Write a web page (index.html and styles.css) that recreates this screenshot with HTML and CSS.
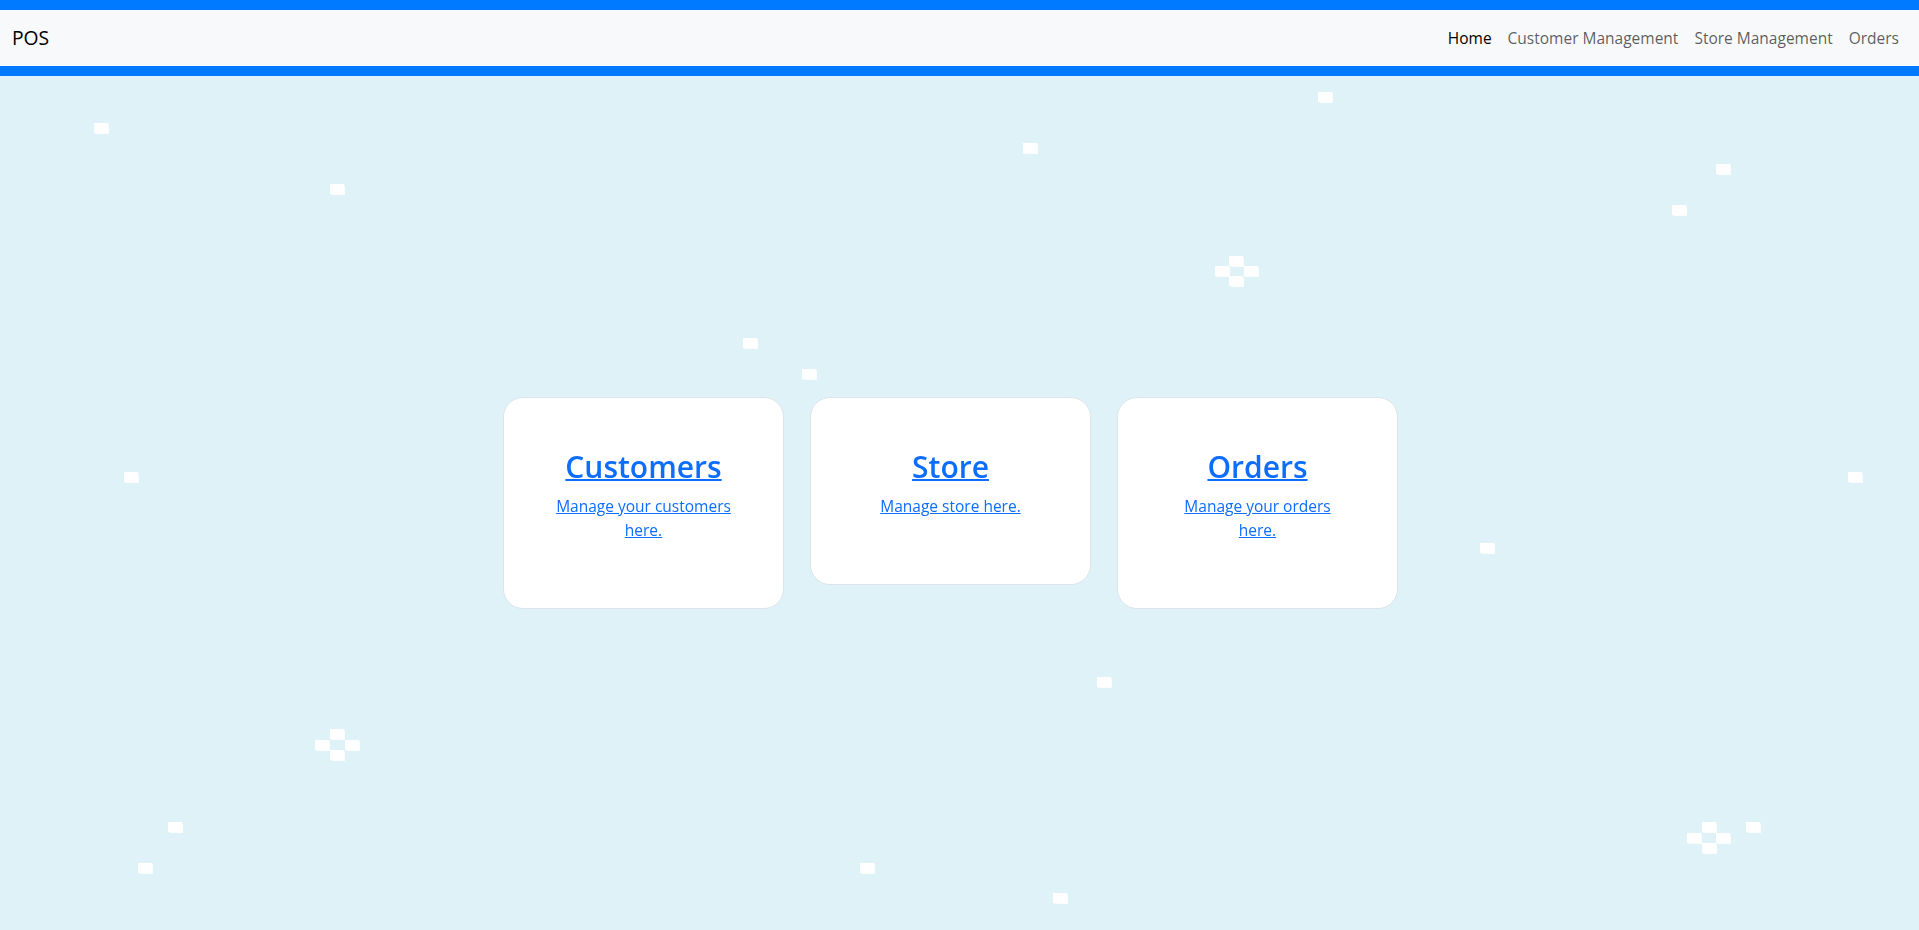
FILE: index.html
```html
<!DOCTYPE html>
<html lang="en">
<head>
<meta charset="utf-8">
<title>POS</title>
<link rel="stylesheet" href="styles.css">
</head>
<body>
<div class="snow" aria-hidden="true">
  <span class="flake s1"></span><span class="flake s2"></span><span class="flake s3"></span>
  <span class="flake s4"></span><span class="flake s5"></span><span class="flake s6"></span>
  <span class="flake s7a"></span><span class="flake s7b"></span><span class="flake s7c"></span><span class="flake s7d"></span>
  <span class="flake s8"></span><span class="flake s9"></span><span class="flake s10"></span>
  <span class="flake s11"></span><span class="flake s12"></span><span class="flake s13"></span>
  <span class="flake s14a"></span><span class="flake s14b"></span><span class="flake s14c"></span><span class="flake s14d"></span>
  <span class="flake s15"></span><span class="flake s16"></span><span class="flake s17"></span><span class="flake s18"></span>
  <span class="flake s19a"></span><span class="flake s19b"></span><span class="flake s19c"></span><span class="flake s19d"></span>
  <span class="flake s20"></span>
</div>
<nav class="navbar">
  <div class="nav-inner">
    <a class="brand" href="#">POS</a>
    <ul class="nav-links">
      <li><a class="nav-link active" href="#">Home</a></li>
      <li><a class="nav-link" href="#">Customer Management</a></li>
      <li><a class="nav-link" href="#">Store Management</a></li>
      <li><a class="nav-link" href="#">Orders</a></li>
    </ul>
  </div>
</nav>
<main class="main">
  <div class="cards">
    <div class="card">
      <a class="card-title" href="#">Customers</a>
      <a class="card-text" href="#">Manage your customers here.</a>
    </div>
    <div class="card">
      <a class="card-title" href="#">Store</a>
      <a class="card-text" href="#">Manage store here.</a>
    </div>
    <div class="card">
      <a class="card-title" href="#">Orders</a>
      <a class="card-text" href="#">Manage your orders here.</a>
    </div>
  </div>
</main>
</body>
</html>
```
FILE: styles.css
```css
* { box-sizing: border-box; }
html, body { margin: 0; padding: 0; }
body {
  height: 100vh;
  display: flex;
  flex-direction: column;
  background: #dff2f8;
  font-family: "Open Sans", "Noto Sans", sans-serif;
  font-size: 15.5px;
  line-height: 24px;
  color: #212529;
  overflow: hidden;
}

/* navbar */
.navbar {
  background: #f8f9fa;
  border-top: 10px solid #007bff;
  border-bottom: 10px solid #007bff;
  padding: 8px 0;
  position: relative;
  z-index: 1;
}
.nav-inner {
  display: flex;
  align-items: center;
  justify-content: space-between;
  padding: 0 12px;
}
.brand {
  font-size: 19.3px;
  line-height: 30px;
  padding: 5px 0;
  color: #000;
  text-decoration: none;
}
.nav-links {
  display: flex;
  list-style: none;
  margin: 0;
  padding: 0;
}
.nav-link {
  display: block;
  padding: 8px;
  color: rgba(0, 0, 0, 0.65);
  text-decoration: none;
}
.nav-link.active { color: #000; }

/* main */
.main {
  flex: 1;
  display: flex;
  align-items: center;
  justify-content: center;
  padding-right: 18px;
  position: relative;
  z-index: 1;
}
.cards {
  display: flex;
  align-items: flex-start;
  gap: 26px;
}
.card {
  width: 281px;
  background: #fff;
  border: 1px solid #dde3e8;
  border-radius: 20px;
  padding: 50px 48px 50px;
  display: flex;
  flex-direction: column;
  align-items: center;
  text-align: center;
}
.card-title {
  font-size: 30px;
  line-height: 38px;
  font-weight: 600;
  color: #0d6efd;
  text-decoration: underline;
  text-decoration-thickness: 2px;
  margin-bottom: 8px;
}
.card-text {
  font-size: 15.5px;
  line-height: 24px;
  color: #0d6efd;
  text-decoration: underline;
  margin-bottom: 16px;
}

/* snow */
.snow {
  position: fixed;
  inset: 0;
  pointer-events: none;
  z-index: 0;
}
.flake {
  position: absolute;
  width: 14px;
  height: 10px;
  background: #fff;
  box-shadow: 0 0 1px 0.5px rgba(255, 255, 255, 0.8);
}
.s1 { left: 94px; top: 123px; }
.s2 { left: 330px; top: 184px; }
.s3 { left: 1023px; top: 143px; }
.s4 { left: 1318px; top: 92px; }
.s5 { left: 1716px; top: 164px; }
.s6 { left: 1672px; top: 205px; }
.s7a { left: 1229px; top: 256px; }
.s7b { left: 1215px; top: 266px; }
.s7c { left: 1244px; top: 266px; }
.s7d { left: 1229px; top: 276px; }
.s8 { left: 743px; top: 338px; }
.s9 { left: 802px; top: 369px; }
.s10 { left: 124px; top: 472px; }
.s11 { left: 1848px; top: 472px; }
.s12 { left: 1480px; top: 543px; }
.s13 { left: 1097px; top: 677px; }
.s14a { left: 330px; top: 729px; }
.s14b { left: 315px; top: 740px; }
.s14c { left: 345px; top: 740px; }
.s14d { left: 330px; top: 750px; }
.s15 { left: 168px; top: 822px; }
.s16 { left: 138px; top: 863px; }
.s17 { left: 860px; top: 863px; }
.s18 { left: 1053px; top: 893px; }
.s19a { left: 1702px; top: 822px; }
.s19b { left: 1687px; top: 833px; }
.s19c { left: 1716px; top: 833px; }
.s19d { left: 1702px; top: 843px; }
.s20 { left: 1746px; top: 822px; }
```
